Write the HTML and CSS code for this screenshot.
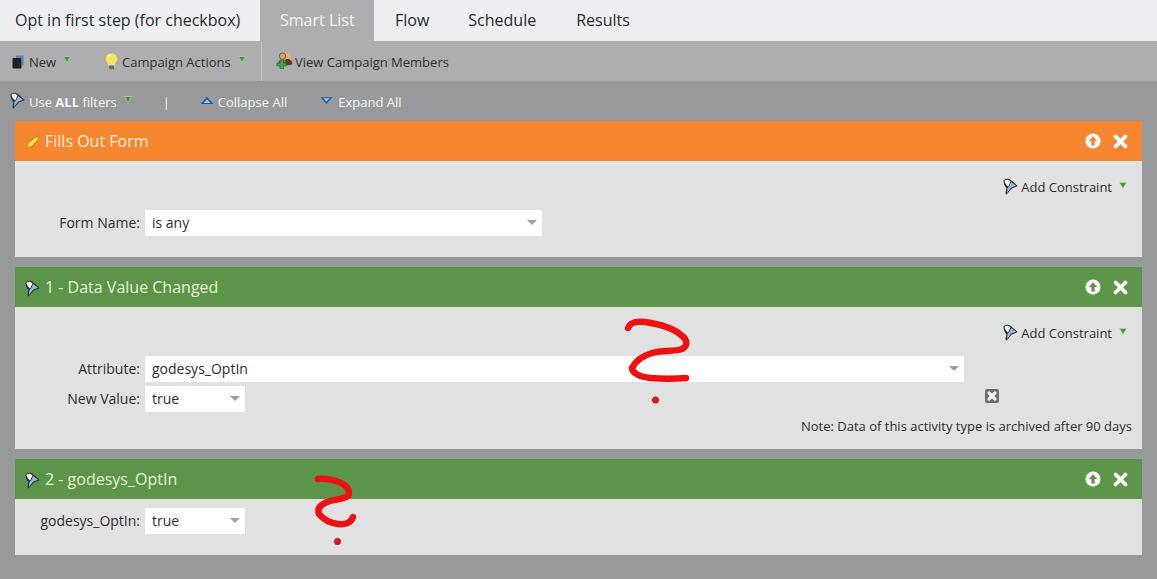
FILE: index.html
```html
<!DOCTYPE html>
<html lang="en">
<head>
<meta charset="utf-8">
<title>Smart List</title>
<link rel="stylesheet" href="styles.css">
</head>
<body>
<svg class="defs" aria-hidden="true">
  <defs>
    <symbol id="funnel" viewBox="0 0 16 18">
      <path d="M0.500 2.500C2.500 0 6.500 0 9 2.500L15.800 8.500L9.500 11L3.500 17.800L2.600 16L3.600 11C1.800 8.500 0.300 5 0.500 2.500Z" fill="#22324c"/>
      <path d="M1.500 2.800C3.500 1.300 6 1.500 8 3.500L5.600 9C3.500 7.500 2 5.200 1.500 2.800Z" fill="#f4f6f9"/>
      <path d="M6.300 9.300L8.700 4.300L13.800 8.300L8.800 10L4.200 15.800L4.800 10.500Z" fill="#a3b4ca"/>
    </symbol>
    <symbol id="tri" viewBox="0 0 8 7">
      <path d="M0 0H8L4 7Z" fill="#a9cf90"/>
      <path d="M1.200 0.900H6.800L4 5.800Z" fill="#4c9440"/>
    </symbol>
    <symbol id="up" viewBox="0 0 16 16">
      <circle cx="8" cy="8" r="7.600" fill="#fff"/>
      <path d="M8 3.200L12.200 8H9.700V12.400H6.300V8H3.800Z" fill="currentColor"/>
    </symbol>
    <symbol id="close" viewBox="0 0 15 15">
      <path d="M2.600 2.600L12.400 12.400M12.400 2.600L2.600 12.400" stroke="#fff" stroke-width="3.800" stroke-linecap="round"/>
    </symbol>
  </defs>
</svg>

<nav class="tabs">
  <span class="tab-title">Opt in first step (for checkbox)</span>
  <span class="tab tab-active">Smart List</span>
  <span class="tab tab-flow">Flow</span>
  <span class="tab">Schedule</span>
  <span class="tab">Results</span>
</nav>

<div class="toolbar">
  <div class="tool tool-new">
    <svg class="ic-new" viewBox="0 0 12 14"><rect x="0.500" y="3" width="9" height="10.500" rx="1" fill="#1d2024"/><path d="M4 0.500H11.500V10L9.800 11V3H4Z" fill="#4a86c5"/></svg>
    <span>New</span>
    <svg class="tri"><use href="#tri"/></svg>
  </div>
  <div class="tool tool-actions">
    <svg class="ic-bulb" viewBox="0 0 13 17"><path d="M6.500 0.500C3 0.500 0.700 3 0.700 6C0.700 8.600 3 10 3.600 12.400H9.400C10 10 12.300 8.600 12.300 6C12.300 3 10 0.500 6.500 0.500Z" fill="#f2e661"/><path d="M3.200 3.500C4 2.300 5 2 6 2" stroke="#fffbd0" stroke-width="1.400" fill="none"/><rect x="4" y="12.600" width="5" height="3.600" rx="1" fill="#70685c"/></svg>
    <span>Campaign Actions</span>
    <svg class="tri"><use href="#tri"/></svg>
  </div>
  <div class="tool tool-members">
    <svg class="ic-people" viewBox="0 0 17 17"><circle cx="11.500" cy="4" r="3" fill="#e0b060"/><path d="M7 14C7 9.500 8.500 7 11.500 7C14.500 7 16.500 9.500 16.500 12.500Z" fill="#6e3524"/><circle cx="6.500" cy="4.200" r="3.200" fill="#d9a860" stroke="#5d4a30" stroke-width="0.800"/><path d="M2 11C2 8.500 4 7.500 6.500 7.500C9 7.500 10 9 10 11Z" fill="#6a7a58"/><path d="M4 8H7.500V11H10.500V14H7.500V16.800H4V14H0.800V11H4Z" fill="#43a648" stroke="#1e5a25" stroke-width="0.600"/></svg>
    <span>View Campaign Members</span>
  </div>
</div>

<div class="filterbar">
  <svg class="ic-funnel-bar"><use href="#funnel"/></svg>
  <span class="use-all">Use <b>ALL</b> filters</span>
  <svg class="tri"><use href="#tri"/></svg>
  <span class="pipe">|</span>
  <svg class="ic-collapse" viewBox="0 0 14 9"><path d="M7 0.800L13.400 8H0.600Z" fill="#1f5f9f"/><path d="M7 3.400L10.400 7H3.600Z" fill="#a7c5e4"/></svg>
  <span class="collapse">Collapse All</span>
  <svg class="ic-expand" viewBox="0 0 14 9"><path d="M7 8.200L13.400 1H0.600Z" fill="#1f5f9f"/><path d="M7 5.600L10.400 2H3.600Z" fill="#a7c5e4"/></svg>
  <span class="expand">Expand All</span>
</div>

<main class="cards">
  <section class="card">
    <header class="card-head head-orange">
      <svg class="ic-form" viewBox="0 0 14 14"><path d="M0 14L1 7.500L8.500 2L14 0L12.500 5.500L6.500 12Z" fill="#c98a1e"/><path d="M1.600 12.400L2.300 8.200L9.200 3L12.400 1.600L11.200 4.900L5.800 10.800Z" fill="#f9dc55"/></svg>
      <h2 class="card-title">Fills Out Form</h2>
      <svg class="ic-up c-orange"><use href="#up"/></svg>
      <svg class="ic-close"><use href="#close"/></svg>
    </header>
    <div class="card-body body-std">
      <div class="constraint">
        <svg class="ic-funnel"><use href="#funnel"/></svg>
        <span>Add Constraint</span>
        <svg class="tri"><use href="#tri"/></svg>
      </div>
      <div class="field">
        <label class="field-label">Form Name:</label>
        <div class="select w-form"><span>is any</span><i class="caret"></i></div>
      </div>
    </div>
  </section>

  <section class="card">
    <header class="card-head head-green">
      <svg class="ic-funnel-head"><use href="#funnel"/></svg>
      <h2 class="card-title">1 - Data Value Changed</h2>
      <svg class="ic-up c-green"><use href="#up"/></svg>
      <svg class="ic-close"><use href="#close"/></svg>
    </header>
    <div class="card-body body-note">
      <div class="constraint">
        <svg class="ic-funnel"><use href="#funnel"/></svg>
        <span>Add Constraint</span>
        <svg class="tri"><use href="#tri"/></svg>
      </div>
      <div class="field">
        <label class="field-label">Attribute:</label>
        <div class="select w-attr"><span>godesys_OptIn</span><i class="caret"></i></div>
      </div>
      <div class="field field-next">
        <label class="field-label">New Value:</label>
        <div class="select w-small"><span>true</span><i class="caret"></i></div>
        <svg class="ic-remove" viewBox="0 0 14 14"><rect width="14" height="14" rx="2" fill="#6f6f6f"/><path d="M4 4L10 10M10 4L4 10" stroke="#f2f2f2" stroke-width="3.200" stroke-linecap="round"/></svg>
      </div>
      <p class="note">Note: Data of this activity type is archived after 90 days</p>
    </div>
  </section>

  <section class="card">
    <header class="card-head head-green">
      <svg class="ic-funnel-head"><use href="#funnel"/></svg>
      <h2 class="card-title">2 - godesys_OptIn</h2>
      <svg class="ic-up c-green"><use href="#up"/></svg>
      <svg class="ic-close"><use href="#close"/></svg>
    </header>
    <div class="card-body body-compact">
      <div class="field">
        <label class="field-label">godesys_OptIn:</label>
        <div class="select w-small"><span>true</span><i class="caret"></i></div>
      </div>
    </div>
  </section>
</main>

<svg class="scribble" viewBox="0 0 1157 579" aria-hidden="true">
  <g fill="none" stroke="#ee1111" stroke-width="6.500" stroke-linecap="round" stroke-linejoin="round">
    <path d="M628 328C630 322 637 321 645 322C660 324 674 329 681 335C688 340 688 346 682 349C673 352 662 350 652 353C642 356 635 362 632 368C632 373 640 377 650 378C662 379 675 379 686 378"/>
    <path d="M318 479C325 478 336 480 343 484C349 488 350 492 348 496C342 500 334 499 327 502C320 505 317 509 319 514C323 519 330 523 338 524C345 525 351 523 353 517"/>
  </g>
  <circle cx="655.500" cy="400" r="3.500" fill="#e01515"/>
  <circle cx="337.500" cy="541.500" r="3.500" fill="#e01515"/>
</svg>
</body>
</html>
```
FILE: styles.css
```css
* { box-sizing: border-box; }
html, body { margin: 0; height: 579px; overflow: hidden; }
body {
  position: relative;
  background: #98999b;
  font-family: "Open Sans", "Liberation Sans", sans-serif;
  font-size: 13px;
  color: #333;
}
.defs { display: none; }
svg { display: block; flex: none; }

.tabs {
  display: flex;
  align-items: stretch;
  height: 41px;
  background: #eeeff3;
  font-size: 16px;
  line-height: 40px;
  color: #2a2a2a;
  white-space: nowrap;
}
.tab-title { width: 260px; padding-left: 15px; }
.tab { padding: 0 20px; }
.tab-flow { padding-right: 19px; }
.tab-active { width: 114px; padding: 0 20px; background: #aeaeb0; color: #f4f4f4; margin-right: 1px; }

.toolbar {
  display: flex;
  align-items: center;
  height: 40px;
  padding-top: 1px;
  background: #aeaeb0;
  color: #2e2e2e;
}
.tool { display: flex; align-items: center; height: 100%; white-space: nowrap; }
.tool-new { padding-left: 12px; width: 105px; }
.tool-new span { margin-left: 5px; margin-right: 7px; }
.tool-actions { width: 157px; border-right: 1px solid #c2c2c4; }
.tool-actions span { margin-left: 4px; margin-right: 7px; }
.tool-members { padding-left: 14px; }
.tool-members span { margin-left: 2px; }
.ic-new { width: 12px; height: 14px; }
.ic-bulb { width: 13px; height: 17px; }
.ic-people { width: 17px; height: 17px; margin-top: -2px; }
.tri { width: 8px; height: 7px; margin-top: -4px; }

.filterbar {
  display: flex;
  align-items: center;
  height: 40px;
  padding-top: 1px;
  background: #98999b;
  color: #f6f6f6;
  white-space: nowrap;
}
.ic-funnel-bar { width: 15px; height: 17px; margin-left: 10px; margin-right: 4px; margin-top: -2px; }
.use-all { margin-right: 7px; }
.pipe { margin-left: 31px; margin-right: 33px; width: 3px; }
.ic-collapse { width: 14px; height: 9px; margin-top: -3px; margin-right: 4px; margin-left: 1px; }
.collapse { margin-right: 33px; }
.ic-expand { width: 13px; height: 9px; margin-top: -3px; margin-right: 5px; }

.cards {
  display: flex;
  flex-direction: column;
  gap: 10px;
  margin: 0 15px;
}
.card { background: #e1e1e1; }
.card-head {
  display: flex;
  align-items: center;
  height: 40px;
  padding-right: 14px;
}
.head-orange { background: #f68630; color: #fdeedd; }
.head-green { background: #5c9549; color: #e4f3d8; }
.card-title {
  margin: 0 auto 0 0;
  font-size: 16px;
  font-weight: 400;
  line-height: 40px;
}
.ic-form { width: 14px; height: 14px; margin: 2px 5px 0 11px; }
.ic-funnel-head { width: 15px; height: 17px; margin: 2px 5px 0 10px; }
.ic-up { width: 16px; height: 16px; margin-right: 12px; }
.c-orange { color: #f68630; }
.c-green { color: #5c9549; }
.ic-close { width: 15px; height: 15px; }

.card-body { display: flex; flex-direction: column; }
.body-std { height: 96px; padding-top: 17px; }
.body-note { height: 142px; padding-top: 17px; }
.body-compact { height: 56px; padding-top: 9px; }

.constraint {
  display: flex;
  align-items: center;
  justify-content: flex-end;
  height: 18px;
  margin-bottom: 14px;
  padding-right: 15px;
  color: #2e2e2e;
}
.constraint span { margin-left: 3px; margin-right: 7px; }
.ic-funnel { width: 15px; height: 17px; margin-top: -2px; }

.field { display: flex; align-items: center; height: 26px; }
.field-next { margin-top: 4px; }
.field-label { width: 125px; margin-right: 5px; padding-bottom: 2px; text-align: right; font-size: 14px; color: #2e2e2e; }
.select {
  display: flex;
  align-items: center;
  justify-content: space-between;
  height: 26px;
  padding: 0 5px 2px 7px;
  background: #fff;
  font-size: 14px;
  color: #2e2e2e;
}
.w-form { width: 397px; }
.w-attr { width: 819px; }
.w-small { width: 100px; }
.caret {
  width: 0;
  height: 0;
  border-left: 5px solid transparent;
  border-right: 5px solid transparent;
  border-top: 5px solid #a0a0a0;
}
.ic-remove { width: 14px; height: 14px; margin-left: 740px; margin-top: -6px; }
.note {
  margin: 5px 10px 0 0;
  line-height: 18px;
  text-align: right;
  color: #2e2e2e;
}

.scribble {
  position: absolute;
  top: 0;
  left: 0;
  width: 1157px;
  height: 579px;
  pointer-events: none;
}
```
